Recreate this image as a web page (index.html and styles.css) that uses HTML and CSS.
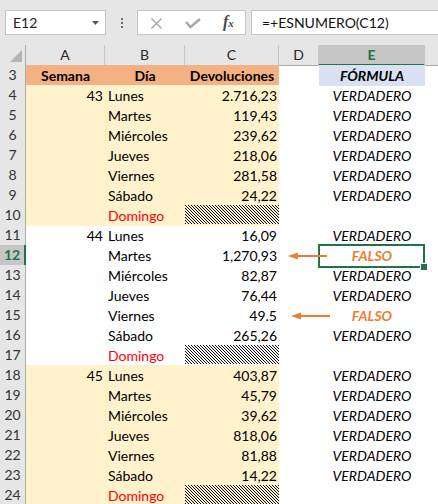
FILE: index.html
```html
<!DOCTYPE html>
<html lang="es">
<head>
<meta charset="utf-8">
<title>ESNUMERO</title>
<link rel="stylesheet" href="styles.css">
</head>
<body>
<div class="app">
  <svg class="defs" width="0" height="0" aria-hidden="true">
    <defs>
      <pattern id="hp" width="3" height="3" patternUnits="userSpaceOnUse">
        <rect x="0" y="0" width="1" height="1"/>
        <rect x="1" y="1" width="1" height="1"/>
        <rect x="2" y="2" width="1" height="1"/>
      </pattern>
    </defs>
  </svg>

  <div class="fbar">
    <div class="namebox">
      <span>E12</span>
      <svg class="dd" width="7" height="4" viewBox="0 0 7 4"><polygon points="0,0 7,0 3.5,4" fill="#595959"/></svg>
    </div>
    <div class="dots"><i></i><i></i><i></i></div>
    <div class="btns">
      <svg class="ix" width="11" height="11" viewBox="0 0 11 11"><path d="M0.5 0.5 L10.5 10.5 M10.5 0.5 L0.5 10.5" stroke="#a6a6a6" stroke-width="1.4" fill="none"/></svg>
      <svg class="ic" width="16" height="11" viewBox="0 0 16 11"><polyline points="1,4 5.5,9 15,1" stroke="#a6a6a6" stroke-width="2.4" fill="none"/></svg>
      <span class="fx">f<span>x</span></span>
    </div>
    <div class="finput">=+ESNUMERO(C12)</div>
  </div>

  <div class="sheet">
    <div class="row colhdr">
      <div class="corner"><svg width="26" height="19" viewBox="0 0 26 19"><polygon points="10,17 22,5 22,17" fill="#b4b4b4"/></svg></div>
      <div class="ch">A</div><div class="ch">B</div><div class="ch">C</div><div class="ch">D</div><div class="ch on">E</div><div class="ch last"></div>
    </div>

    <div class="row"><div class="rh">3</div><div class="c hd">Semana</div><div class="c hd">Día</div><div class="c hd">Devoluciones</div><div class="c"></div><div class="c fh">FÓRMULA</div><div class="c"></div></div>

    <div class="row"><div class="rh">4</div><div class="c a y">43</div><div class="c b y">Lunes</div><div class="c cc y">2.716,23</div><div class="c"></div><div class="c e">VERDADERO</div><div class="c"></div></div>
    <div class="row"><div class="rh">5</div><div class="c a y"></div><div class="c b y">Martes</div><div class="c cc y">119,43</div><div class="c"></div><div class="c e">VERDADERO</div><div class="c"></div></div>
    <div class="row"><div class="rh">6</div><div class="c a y"></div><div class="c b y">Miércoles</div><div class="c cc y">239,62</div><div class="c"></div><div class="c e">VERDADERO</div><div class="c"></div></div>
    <div class="row"><div class="rh">7</div><div class="c a y"></div><div class="c b y">Jueves</div><div class="c cc y">218,06</div><div class="c"></div><div class="c e">VERDADERO</div><div class="c"></div></div>
    <div class="row"><div class="rh">8</div><div class="c a y"></div><div class="c b y">Viernes</div><div class="c cc y">281,58</div><div class="c"></div><div class="c e">VERDADERO</div><div class="c"></div></div>
    <div class="row"><div class="rh">9</div><div class="c a y"></div><div class="c b y">Sábado</div><div class="c cc y">24,22</div><div class="c"></div><div class="c e">VERDADERO</div><div class="c"></div></div>
    <div class="row"><div class="rh">10</div><div class="c a y"></div><div class="c b y red">Domingo</div><div class="c cc y hatch"><svg width="94" height="19"><rect width="94" height="19" fill="url(#hp)"/></svg></div><div class="c"></div><div class="c e"></div><div class="c"></div></div>

    <div class="row"><div class="rh">11</div><div class="c a">44</div><div class="c b">Lunes</div><div class="c cc">16,09</div><div class="c"></div><div class="c e">VERDADERO</div><div class="c"></div></div>
    <div class="row"><div class="rh on">12</div><div class="c a"></div><div class="c b">Martes</div><div class="c cc">1,270,93</div><div class="c"></div><div class="c e falso sel">FALSO</div><div class="c"></div></div>
    <div class="row"><div class="rh">13</div><div class="c a"></div><div class="c b">Miércoles</div><div class="c cc">82,87</div><div class="c"></div><div class="c e">VERDADERO</div><div class="c"></div></div>
    <div class="row"><div class="rh">14</div><div class="c a"></div><div class="c b">Jueves</div><div class="c cc">76,44</div><div class="c"></div><div class="c e">VERDADERO</div><div class="c"></div></div>
    <div class="row"><div class="rh">15</div><div class="c a"></div><div class="c b">Viernes</div><div class="c cc">49.5</div><div class="c"></div><div class="c e falso">FALSO</div><div class="c"></div></div>
    <div class="row"><div class="rh">16</div><div class="c a"></div><div class="c b">Sábado</div><div class="c cc">265,26</div><div class="c"></div><div class="c e">VERDADERO</div><div class="c"></div></div>
    <div class="row"><div class="rh">17</div><div class="c a"></div><div class="c b red">Domingo</div><div class="c cc hatch"><svg width="94" height="19"><rect width="94" height="19" fill="url(#hp)"/></svg></div><div class="c"></div><div class="c e"></div><div class="c"></div></div>

    <div class="row"><div class="rh">18</div><div class="c a y">45</div><div class="c b y">Lunes</div><div class="c cc y">403,87</div><div class="c"></div><div class="c e">VERDADERO</div><div class="c"></div></div>
    <div class="row"><div class="rh">19</div><div class="c a y"></div><div class="c b y">Martes</div><div class="c cc y">45,79</div><div class="c"></div><div class="c e">VERDADERO</div><div class="c"></div></div>
    <div class="row"><div class="rh">20</div><div class="c a y"></div><div class="c b y">Miércoles</div><div class="c cc y">39,62</div><div class="c"></div><div class="c e">VERDADERO</div><div class="c"></div></div>
    <div class="row"><div class="rh">21</div><div class="c a y"></div><div class="c b y">Jueves</div><div class="c cc y">818,06</div><div class="c"></div><div class="c e">VERDADERO</div><div class="c"></div></div>
    <div class="row"><div class="rh">22</div><div class="c a y"></div><div class="c b y">Viernes</div><div class="c cc y">81,88</div><div class="c"></div><div class="c e">VERDADERO</div><div class="c"></div></div>
    <div class="row"><div class="rh">23</div><div class="c a y"></div><div class="c b y">Sábado</div><div class="c cc y">14,22</div><div class="c"></div><div class="c e">VERDADERO</div><div class="c"></div></div>
    <div class="row"><div class="rh">24</div><div class="c a y"></div><div class="c b y red">Domingo</div><div class="c cc y hatch"><svg width="94" height="19"><rect width="94" height="19" fill="url(#hp)"/></svg></div><div class="c"></div><div class="c e"></div><div class="c"></div></div>
  </div>

  <svg class="arrows" width="438" height="504" viewBox="0 0 438 504" aria-hidden="true">
    <line x1="327" y1="256" x2="296" y2="256" stroke="#ed7d31" stroke-width="2"/>
    <polygon points="288,256 298,252.5 298,259.5" fill="#ed7d31"/>
    <line x1="330" y1="316" x2="299" y2="316" stroke="#ed7d31" stroke-width="2"/>
    <polygon points="291,316 301,312.5 301,319.5" fill="#ed7d31"/>
  </svg>
</div>
</body>
</html>
```

FILE: styles.css
```css
* { box-sizing: border-box; margin: 0; padding: 0; }
html, body { width: 438px; height: 504px; overflow: hidden; background: #fff; }
body { font-family: Lato, "Liberation Sans", sans-serif; font-size: 14px; color: #000; }

.app { position: relative; width: 438px; height: 504px; overflow: hidden; }
.defs { position: absolute; }

/* formula bar */
.fbar { height: 45px; background: #e6e6e6; display: flex; align-items: flex-start; padding-top: 10px; }
.namebox { margin-left: 5px; width: 101px; height: 25px; background: #fff; border: 1px solid #c6c6c6;
  display: flex; align-items: center; justify-content: space-between; padding: 0 6px 0 7px; font-size: 14px; color: #222; }
.dots { width: 31px; height: 25px; display: flex; flex-direction: column; align-items: center; gap: 2px; padding-top: 8px; }
.dots i { display: block; width: 2px; height: 2px; background: #6e6e6e; }
.btns { width: 109px; height: 25px; background: #fff; border: 1px solid #c6c6c6; display: flex; align-items: center; padding-left: 13px; }
.ix { margin-top: 2px; }
.ic { margin-left: 23px; margin-top: 1px; }
.fx { margin-left: 22px; margin-top: -2px; font-family: "Liberation Serif", serif; font-style: italic; font-weight: bold; font-size: 16px; color: #4a4a4a; line-height: 1; }
.fx span { font-size: 11px; }
.finput { margin-left: 5px; flex: 1; height: 25px; background: #fff; border: 1px solid #c6c6c6; border-right: none;
  padding-left: 10px; font-size: 14px; line-height: 23px; color: #111; }

/* sheet */
.row { display: grid; grid-template-columns: 26px 79px 80px 94px 40px 106px 13px; height: 20px; }
.colhdr { background: #e6e6e6; }
.corner { border-right: 1px solid #ababab; border-bottom: 1px solid #ababab; }
.corner svg { display: block; }
.ch { text-align: center; line-height: 19px; border-right: 1px solid #c8c8c8; border-bottom: 1px solid #ababab; color: #262626; }
.ch.last { border-right: none; }
.ch.on { background: #c6c6c6; color: #217346; font-weight: bold; border-bottom: 2px solid #217346; }

.rh { background: #e6e6e6; border-right: 1px solid #ababab; border-bottom: 1px solid #c8c8c8;
  text-align: center; line-height: 20px; color: #333; }
.rh.on { background: #c6c6c6; color: #217346; font-weight: bold; border-right: 2px solid #217346; }

.c { line-height: 21px; white-space: nowrap; overflow: visible; }
.a { text-align: right; padding-right: 2px; }
.b { padding-left: 3px; }
.cc { text-align: right; padding-right: 2px; }
.e { text-align: center; font-style: italic; }
.y { background: #fff2cc; }
.hd { background: #f4b183; font-weight: bold; text-align: center; }
.fh { background: #d9e1f2; font-weight: bold; font-style: italic; text-align: center; }
.red { color: #ff0000; }
.falso { color: #ed7d31; font-weight: bold; }
.hatch svg { display: block; }

.sel { position: relative; }
.sel::after { content: ""; position: absolute; left: -1px; top: -1px; right: 0; bottom: -2px; border: 2px solid #217346; }
.sel::before { content: ""; position: absolute; right: -2px; bottom: -4px; width: 6px; height: 6px; background: #217346;
  border-left: 1px solid #fff; border-top: 1px solid #fff; z-index: 1; }

.arrows { position: absolute; left: 0; top: 0; pointer-events: none; }
```
